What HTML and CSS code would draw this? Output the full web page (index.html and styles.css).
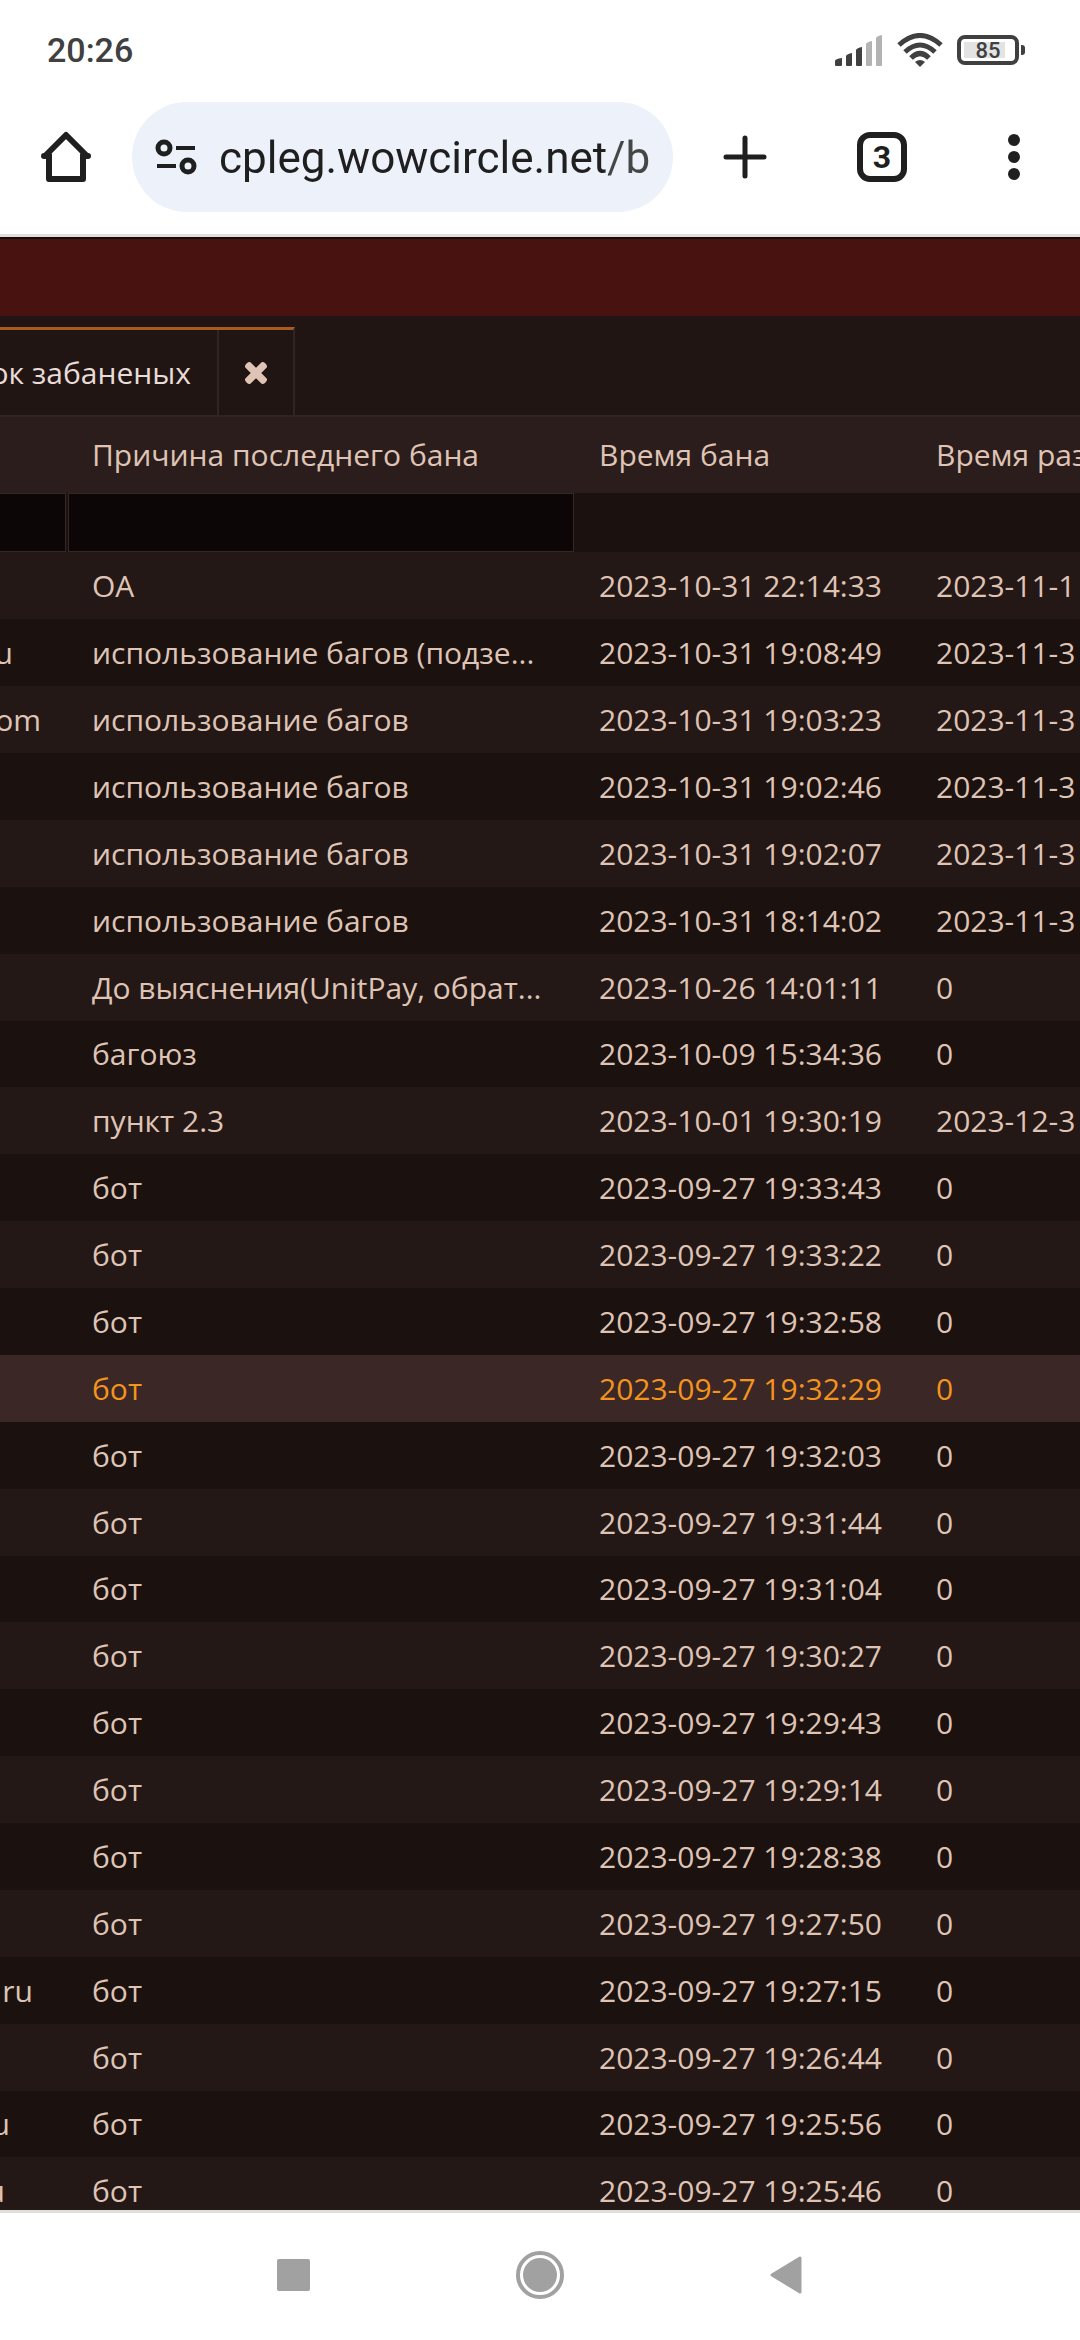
FILE: index.html
```html
<!DOCTYPE html>
<html lang="ru">
<head>
    <meta charset="utf-8"/>
    <title>Список забаненых</title>
    <meta name="viewport" content="width=device-width, initial-scale=1.0"/>
    <link rel="stylesheet" href="styles.css">
</head>
<body>
<div class="status_bar">
    <span class="status_time">20:26</span>
    <div class="status_icons">
        <svg class="icon_signal" viewBox="0 0 48 32">
            <path d="M0 31V27Q0 25 7 24V31Q7 32 6 32H1Q0 32 0 31ZM11 31V22Q12 20 17 19V31Q17 32 16 32H12Q11 32 11 31ZM21 31V16Q22 14 27 13V31Q27 32 26 32H22Q21 32 21 31Z" fill="#404040"/>
            <path d="M31 31V10Q32 8 37 7V31Q37 32 36 32H32Q31 32 31 31ZM41 31V4Q42 2 47 1V31Q47 32 46 32H42Q41 32 41 31Z" fill="#b3b3b3"/>
        </svg>
        <svg class="icon_wifi" viewBox="0 0 46 34" fill="none" stroke="#404040" stroke-width="5">
            <path d="M2 12Q23 -7 44 12"/>
            <path d="M8 19Q23 5 38 19"/>
            <path d="M14 25Q23 16 32 25"/>
            <path d="M18 29Q23 25 28 29L23 34Z" fill="#404040" stroke="none"/>
        </svg>
        <div class="battery">
            <span>85</span>
        </div>
    </div>
</div>
<div class="toolbar">
    <button class="tool_home" aria-label="Главная">
        <svg width="50" height="52" viewBox="0 0 50 52" fill="none" stroke="#1f1f1f" stroke-width="6" stroke-linecap="round" stroke-linejoin="round">
            <path d="M3 26L25 4L47 26" stroke-linecap="butt"/>
            <path d="M8 24V48H42V24M3 25H8M42 25H47"/>
        </svg>
    </button>
    <div class="address">
        <svg width="42" height="36" viewBox="0 0 42 36" fill="none" stroke="#1f1f1f">
            <circle cx="9" cy="9" r="6" stroke-width="5"/>
            <circle cx="33" cy="27" r="6" stroke-width="5"/>
            <path d="M21 9H40M2 27H21" stroke-width="4"/>
        </svg>
        <input class="address_input" type="text" value="cpleg.wowcircle.net/b" aria-label="Адрес">
    </div>
    <button class="tool_new" aria-label="Новая вкладка">
        <svg width="44" height="44" viewBox="0 0 44 44" stroke="#1f1f1f" stroke-width="5" stroke-linecap="round">
            <path d="M22 3V41M3 22H41"/>
        </svg>
    </button>
    <button class="tool_tabs" aria-label="Вкладки"><span>3</span></button>
    <button class="tool_menu" aria-label="Меню">
        <svg width="12" height="46" viewBox="0 0 12 46" fill="#1f1f1f">
            <circle cx="6" cy="6" r="6"/>
            <circle cx="6" cy="23" r="6"/>
            <circle cx="6" cy="40" r="6"/>
        </svg>
    </button>
</div>
<main class="page">
    <div class="page_head"></div>
    <div class="tabs">
        <div class="tab">
            <span class="tab_name">ок забаненых</span>
            <button class="tab_close" aria-label="Закрыть">
                <svg width="22" height="22" viewBox="0 0 22 22" fill="none" stroke="#dfc4b5" stroke-width="7">
                    <path d="M2 2L20 20M20 2L2 20"/>
                    <path d="M4 4L18 18M18 4L4 18" stroke-linecap="round"/>
                </svg>
            </button>
        </div>
    </div>
    <table class="bans">
        <colgroup>
            <col class="col_mail">
            <col class="col_reason">
            <col class="col_time">
            <col>
        </colgroup>
        <thead>
            <tr>
                <th></th>
                <th>Причина последнего бана</th>
                <th>Время бана</th>
                <th>Время разбана</th>
            </tr>
            <tr class="filters">
                <td class="filter_mail"><input type="text" aria-label="Почта"></td>
                <td><input type="text" aria-label="Причина последнего бана"></td>
                <td></td>
                <td></td>
            </tr>
        </thead>
        <tbody>
            <tr><td></td><td>OA</td><td>2023-10-31 22:14:33</td><td>2023-11-1</td></tr>
            <tr><td><span class="mail" style="width: 13px">u</span></td><td>использование багов (подзе...</td><td>2023-10-31 19:08:49</td><td>2023-11-3</td></tr>
            <tr><td><span class="mail" style="width: 41px">om</span></td><td>использование багов</td><td>2023-10-31 19:03:23</td><td>2023-11-3</td></tr>
            <tr><td></td><td>использование багов</td><td>2023-10-31 19:02:46</td><td>2023-11-3</td></tr>
            <tr><td></td><td>использование багов</td><td>2023-10-31 19:02:07</td><td>2023-11-3</td></tr>
            <tr><td></td><td>использование багов</td><td>2023-10-31 18:14:02</td><td>2023-11-3</td></tr>
            <tr><td></td><td>До выяснения(UnitPay, обрат...</td><td>2023-10-26 14:01:11</td><td>0</td></tr>
            <tr><td></td><td>багоюз</td><td>2023-10-09 15:34:36</td><td>0</td></tr>
            <tr><td></td><td>пункт 2.3</td><td>2023-10-01 19:30:19</td><td>2023-12-3</td></tr>
            <tr><td></td><td>бот</td><td>2023-09-27 19:33:43</td><td>0</td></tr>
            <tr><td></td><td>бот</td><td>2023-09-27 19:33:22</td><td>0</td></tr>
            <tr><td></td><td>бот</td><td>2023-09-27 19:32:58</td><td>0</td></tr>
            <tr class="selected"><td></td><td>бот</td><td>2023-09-27 19:32:29</td><td>0</td></tr>
            <tr><td></td><td>бот</td><td>2023-09-27 19:32:03</td><td>0</td></tr>
            <tr><td></td><td>бот</td><td>2023-09-27 19:31:44</td><td>0</td></tr>
            <tr><td></td><td>бот</td><td>2023-09-27 19:31:04</td><td>0</td></tr>
            <tr><td></td><td>бот</td><td>2023-09-27 19:30:27</td><td>0</td></tr>
            <tr><td></td><td>бот</td><td>2023-09-27 19:29:43</td><td>0</td></tr>
            <tr><td></td><td>бот</td><td>2023-09-27 19:29:14</td><td>0</td></tr>
            <tr><td></td><td>бот</td><td>2023-09-27 19:28:38</td><td>0</td></tr>
            <tr><td></td><td>бот</td><td>2023-09-27 19:27:50</td><td>0</td></tr>
            <tr><td><span class="mail" style="width: 33px">ru</span></td><td>бот</td><td>2023-09-27 19:27:15</td><td>0</td></tr>
            <tr><td></td><td>бот</td><td>2023-09-27 19:26:44</td><td>0</td></tr>
            <tr><td><span class="mail" style="width: 10px">u</span></td><td>бот</td><td>2023-09-27 19:25:56</td><td>0</td></tr>
            <tr><td><span class="mail" style="width: 5px">u</span></td><td>бот</td><td>2023-09-27 19:25:46</td><td>0</td></tr>
        </tbody>
    </table>
</main>
<nav class="nav_bar">
    <button aria-label="Недавние">
        <svg width="34" height="34" viewBox="0 0 34 34"><rect x="0" y="1" width="33" height="32" rx="2" fill="#a1a1a1"/></svg>
    </button>
    <button aria-label="Домой">
        <svg width="50" height="50" viewBox="0 0 50 50">
            <circle cx="25" cy="25" r="22" fill="none" stroke="#a1a1a1" stroke-width="4"/>
            <circle cx="25" cy="25" r="17" fill="#a1a1a1"/>
        </svg>
    </button>
    <button aria-label="Назад">
        <svg width="34" height="38" viewBox="0 0 34 38"><path d="M3 19L31 2V36Z" fill="#a1a1a1" stroke="#a1a1a1" stroke-width="3" stroke-linejoin="round"/></svg>
    </button>
</nav>
</body>
</html>
```
FILE: styles.css
```css
* {
    box-sizing: border-box;
}

body {
    display: flex;
    flex-direction: column;
    height: 100vh;
    margin: 0;
    overflow: hidden;
    background: #fff;
    font-family: Roboto, sans-serif;
}

button {
    display: flex;
    align-items: center;
    justify-content: center;
    padding: 0;
    border: 0;
    background: none;
    font-family: inherit;
}

.status_bar {
    display: flex;
    align-items: center;
    justify-content: space-between;
    height: 102px;
    padding: 0 55px 2px 47px;
    color: #404040;
}

.status_time {
    font-size: 34px;
    font-weight: 500;
}

.status_icons {
    display: flex;
    align-items: center;
    gap: 14px;
}

.icon_signal {
    width: 48px;
    height: 32px;
}

.icon_wifi {
    width: 46px;
    height: 34px;
}

.battery {
    position: relative;
    display: flex;
    align-items: center;
    justify-content: center;
    width: 62px;
    height: 30px;
    margin-right: 6px;
    border: 4px solid #404040;
    border-radius: 8px;
    background: linear-gradient(#e3e3e3, #e3e3e3) 3px center / 41px 16px no-repeat;
    font-size: 22px;
    font-weight: 500;
}

.battery::after {
    content: "";
    position: absolute;
    top: 6px;
    right: -10px;
    width: 4px;
    height: 10px;
    border-radius: 0 3px 3px 0;
    background: #404040;
}

.toolbar {
    display: flex;
    height: 135px;
    padding-bottom: 22px;
    border-bottom: 3px solid #dfdfdf;
}

.tool_home {
    width: 132px;
}

.address {
    display: flex;
    flex: 1;
    align-items: center;
    gap: 22px;
    min-width: 0;
    padding: 0 12px 0 23px;
    border-radius: 55px;
    background: #ecf1fa;
}

.address svg {
    flex: none;
}

.address_input {
    flex: 1;
    min-width: 0;
    padding: 2px 0 0;
    border: 0;
    background: linear-gradient(90deg, #1f1f1f 390px, #444746 390px);
    -webkit-background-clip: text;
    background-clip: text;
    color: transparent;
    font-family: inherit;
    font-size: 44px;
}

.tool_new {
    width: 144px;
}

.tool_tabs {
    width: 130px;
}

.tool_tabs span {
    width: 50px;
    height: 50px;
    border: 6px solid #1f1f1f;
    border-radius: 13px;
    color: #1f1f1f;
    font-size: 32px;
    font-weight: 700;
    line-height: 38px;
}

.tool_menu {
    width: 133px;
}

.page {
    flex: 1;
    min-height: 0;
    overflow: hidden;
    border-top: 2px solid #160d0b;
    background: #1b110f;
    color: #dfc4b5;
    font-family: "Open Sans", "Noto Sans", sans-serif;
    font-size: 30px;
}

.page_head {
    height: 77px;
    background: #471210;
}

.tabs {
    display: flex;
    height: 101px;
    padding-top: 11px;
    border-bottom: 2px solid #312423;
    background: #201513;
}

.tab {
    display: flex;
    width: 295px;
    border-top: 3px solid #a85a20;
    border-right: 2px solid #312423;
}

.tab_name {
    display: flex;
    flex: 1;
    align-items: center;
    justify-content: flex-end;
    min-width: 0;
    padding-right: 26px;
    overflow: hidden;
    color: #e8dcd8;
    white-space: nowrap;
}

.tab_close {
    width: 76px;
    border-left: 2px solid #312423;
}

.bans {
    width: 100%;
    table-layout: fixed;
    border-collapse: collapse;
}

.col_mail {
    width: 67px;
}

.col_reason {
    width: 507px;
}

.col_time {
    width: 337px;
}

.bans th,
.bans td {
    height: 67px;
    padding: 0 0 0 25px;
    overflow: hidden;
    line-height: 40px;
    text-align: left;
    white-space: nowrap;
    font-weight: 400;
}

.bans th {
    height: 76px;
    background: #2b1d1c;
}

.bans .filters td {
    height: 59px;
    padding: 0 0 0 1px;
}

.bans .filters .filter_mail {
    padding: 0 1px 0 0;
}

.filters input {
    display: block;
    width: 100%;
    height: 59px;
    border: 1px solid #352725;
    background: #0c0706;
    color: inherit;
    font: inherit;
}

.filter_mail input {
    border-left: 0;
}

.bans tbody tr:nth-child(odd) {
    background: #241816;
}

/* keeps the row step a touch under 67px */
.bans tbody tr:nth-child(8n) td {
    height: 66px;
}

.bans tbody tr.selected {
    background: #3a2726;
    color: #f3941e;
}

.bans tbody td:first-child {
    padding: 0;
}

/* the part of the address left in view after the sideways scroll */
.mail {
    display: flex;
    justify-content: flex-end;
    overflow: hidden;
}

.nav_bar {
    display: flex;
    justify-content: center;
    height: 130px;
    padding-bottom: 3px;
    border-top: 3px solid #dfdfdb;
}

.nav_bar button {
    width: 246px;
}
```
